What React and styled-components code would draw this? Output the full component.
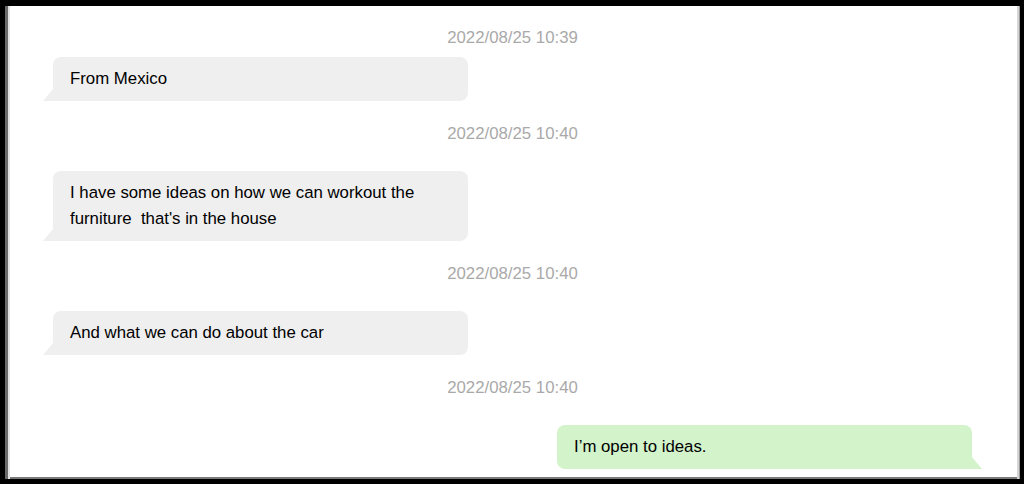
import React from "react";
import styled, { createGlobalStyle } from "styled-components";

const Global = createGlobalStyle`
  html, body { margin: 0; padding: 0; background: #000; }
  body { font-family: "Liberation Sans", Arial, Helvetica, sans-serif; }
`;

const Frame = styled.div`
  width: 1024px;
  height: 484px;
  box-sizing: border-box;
  padding: 6px 4px 5px 5px;
  background: #000;
`;

const Panel = styled.div`
  height: 100%;
  background: #fff;
  overflow: hidden;
  box-sizing: border-box;
  padding: 22px 48px 0 48px;
  display: flex;
  flex-direction: column;
  box-shadow: inset 3px 0 0 #6a6a6a, inset 5px 0 0 #e2e2e2,
    inset -1px 0 0 #9a9a9a, inset -3px 0 0 #d6d6d6,
    inset 0 -2px 0 #7a7a7a;
`;

const Stamp = styled.div`
  text-align: center;
  font-size: 16.8px;
  line-height: 20px;
  color: #a9a9a9;
  margin-top: ${(p) => (p.$first ? 0 : 23)}px;
  margin-bottom: ${(p) => (p.$first ? 9 : 27)}px;
`;

const Row = styled.div`
  display: flex;
  justify-content: ${(p) => (p.$out ? "flex-end" : "flex-start")};
`;

const Bubble = styled.div`
  position: relative;
  width: 415px;
  box-sizing: border-box;
  padding: 9px 17px;
  font-size: 16.8px;
  line-height: 26px;
  color: #000;
  background: ${(p) => (p.$out ? "#d3f3cb" : "#efefef")};
  border-radius: ${(p) => (p.$out ? "8px 8px 0 8px" : "8px 8px 8px 0")};

  &::after {
    content: "";
    position: absolute;
    bottom: 0;
    width: 0;
    height: 0;
    border-bottom: 12px solid ${(p) => (p.$out ? "#d3f3cb" : "#efefef")};
    ${(p) =>
      p.$out
        ? `right: -10px; border-right: 10px solid transparent;`
        : `left: -10px; border-left: 10px solid transparent;`}
  }
`;

const messages = [
  { time: "2022/08/25 10:39", text: "From Mexico" },
  {
    time: "2022/08/25 10:40",
    text: "I have some ideas on how we can workout the furniture\u00a0 that's in the house",
  },
  { time: "2022/08/25 10:40", text: "And what we can do about the car" },
  { time: "2022/08/25 10:40", text: "I\u2019m open to ideas.", out: true },
];

export default function App() {
  return (
    <>
      <Global />
      <Frame>
        <Panel>
          {messages.map((m, i) => (
            <React.Fragment key={i}>
              <Stamp $first={i === 0}>{m.time}</Stamp>
              <Row $out={m.out}>
                <Bubble $out={m.out}>{m.text}</Bubble>
              </Row>
            </React.Fragment>
          ))}
        </Panel>
      </Frame>
    </>
  );
}
